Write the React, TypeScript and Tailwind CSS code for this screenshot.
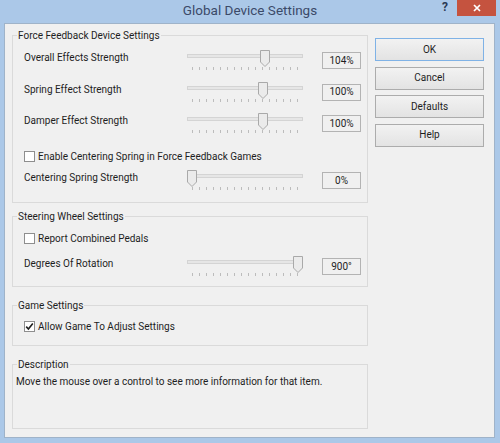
import React from 'react';

const FONT = "font-[family-name:Roboto,'Liberation_Sans',sans-serif]";

function Slider({ pos }: { pos: number }) {
  const left = Math.round(pos * 106);
  return (
    <div className="relative w-[116px] h-[21px] shrink-0">
      <div className="mt-[4px] h-[4px] border border-[#d4d4d4] bg-[#e6e6e6]" />
      <div className="mt-[9px] flex justify-between px-[5px]">
        {Array.from({ length: 16 }).map((_, i) => (
          <div key={i} className="w-px h-[3px] bg-[#bcbcbc]" />
        ))}
      </div>
      <svg className="absolute top-0" style={{ left }} width="10" height="17" viewBox="0 0 10 17">
        <path d="M0.5 0.5 H9.5 V12 L5 16.5 L0.5 12 Z" fill="#ebebeb" stroke="#a9a9a9" />
      </svg>
    </div>
  );
}

function SliderRow({ label, pos, value, h }: { label: string; pos: number; value: string; h: string }) {
  return (
    <div className={`flex items-start pl-[11px] ${h}`}>
      <span className="w-[163px] mt-[2px] leading-[12px] shrink-0">{label}</span>
      <Slider pos={pos} />
      <div className="ml-[19px] mt-[2px] w-[39px] h-[17px] border border-[#b3b3b3] flex items-center justify-center leading-[12px]">
        {value}
      </div>
    </div>
  );
}

function Check({ label, checked, h }: { label: string; checked?: boolean; h: string }) {
  return (
    <div className={`flex items-start pl-[11px] ${h}`}>
      <div className="mt-[1px] w-[11px] h-[11px] border border-[#8e8e8e] bg-white flex items-center justify-center">
        {checked && (
          <svg width="9" height="9" viewBox="0 0 9 9">
            <path d="M1.2 4.6 L3.4 7 L7.8 1.4" fill="none" stroke="#1e1e1e" strokeWidth="1.6" />
          </svg>
        )}
      </div>
      <span className="ml-[3px] leading-[13px]">{label}</span>
    </div>
  );
}

function Group({ title, className, children }: { title: string; className: string; children: React.ReactNode }) {
  return (
    <div className={`relative border border-[#dadada] ${className}`}>
      <span className="absolute -top-[6px] left-[4px] px-[1px] leading-[12px] bg-[#f0f0f0]">{title}</span>
      {children}
    </div>
  );
}

const buttons = ['OK', 'Cancel', 'Defaults', 'Help'];

export default function App() {
  return (
    <div className={`w-[500px] h-[443px] bg-[#abc8e8] overflow-hidden text-[10px] text-[#1e1e1e] ${FONT}`}>
      <div className="relative h-[23px]">
        <div className="text-center text-[13.5px] leading-[20px] text-[#3b4a68]">Global Device Settings</div>
        <div className="absolute top-0 right-[4px] flex">
          <span className="w-[14px] text-center text-[12px] font-bold leading-[15px] text-[#2b3a55] mr-[5px]">?</span>
          <div className="w-[39px] h-[16px] bg-[#c5533f] flex items-center justify-center">
            <svg width="8" height="8" viewBox="0 0 8 8">
              <path d="M1 1 L7 7 M7 1 L1 7" stroke="#ffffff" strokeWidth="1.7" />
            </svg>
          </div>
        </div>
      </div>

      <div className="ml-[4px] mr-[5px] h-[415px] border border-[#9fb3c9] bg-[#f0f0f0] flex">
        <div className="ml-[7px] w-[356px] flex flex-col">
          <Group title="Force Feedback Device Settings" className="mt-[11px] h-[168px] pt-[14px]">
            <SliderRow label="Overall Effects Strength" pos={104 / 150} value="104%" h="h-[31.5px]" />
            <SliderRow label="Spring Effect Strength" pos={100 / 150} value="100%" h="h-[31.5px]" />
            <SliderRow label="Damper Effect Strength" pos={100 / 150} value="100%" h="h-[36.5px]" />
            <Check label="Enable Centering Spring in Force Feedback Games" h="h-[20.5px]" />
            <SliderRow label="Centering Spring Strength" pos={0} value="0%" h="h-[21px]" />
          </Group>

          <Group title="Steering Wheel Settings" className="mt-[13px] h-[71px] pt-[15px]">
            <Check label="Report Combined Pedals" h="h-[24px]" />
            <SliderRow label="Degrees Of Rotation" pos={1} value="900°" h="h-[21px]" />
          </Group>

          <Group title="Game Settings" className="mt-[18px] h-[41px] pt-[14px]">
            <Check label="Allow Game To Adjust Settings" checked h="h-[14px]" />
          </Group>

          <Group title="Description" className="mt-[18px] h-[65px] pt-[11px] pl-[3px]">
            <p className="leading-[12px]">Move the mouse over a control to see more information for that item.</p>
          </Group>
        </div>

        <div className="ml-[7px] mt-[14px] w-[109px] flex flex-col gap-[5.5px]">
          {buttons.map((b) => (
            <button
              key={b}
              className={`h-[23px] border bg-gradient-to-b from-[#f2f2f2] to-[#e3e3e3] leading-[12px] ${
                b === 'OK' ? 'border-[#7fb2e6]' : 'border-[#acacac]'
              }`}
            >
              {b}
            </button>
          ))}
        </div>
      </div>
    </div>
  );
}
